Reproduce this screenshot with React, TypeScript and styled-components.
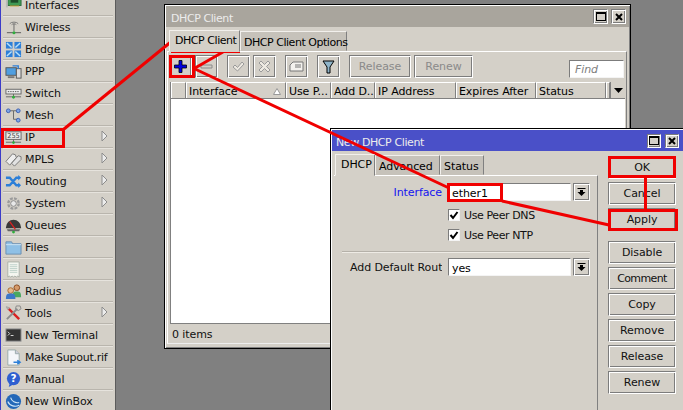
import React from "react";
import styled, { createGlobalStyle, css } from "styled-components";

const Global = createGlobalStyle`
  html, body { margin: 0; padding: 0; width: 683px; height: 410px; overflow: hidden; background: #808080; }
  * { box-sizing: border-box; }
`;

const FACE = "#d4d0c8";
const raised = css`
  border: 1px solid;
  border-color: #7c7c7c #fff #fff #7c7c7c;
  box-shadow: inset 1px 1px #fff, inset -1px -1px #7c7c7c;
  background: ${FACE};
`;
const sunken = css`
  border: 1px solid;
  border-color: #7c7c7c #f4f4f4 #f4f4f4 #7c7c7c;
  background: #fff;
`;

const Screen = styled.div`
  position: relative;
  width: 683px;
  height: 410px;
  overflow: hidden;
  display: flex;
  background: #808080;
  font: 11px/13px "DejaVu Sans", sans-serif;
  letter-spacing: -0.08px;
  color: #000;
`;
const Squeeze = styled.span<{ $by: number }>`
  letter-spacing: ${(p) => p.$by}px;
`;

const Sidebar = styled.nav`
  width: 116px;
  height: 410px;
  overflow: hidden;
  flex: none;
  background: ${FACE};
  border-left: 1px solid #3c3cc8;
  border-right: 1px solid #5c5c5c;
  padding: 0 2px;
`;
const MenuList = styled.div`
  margin-top: -6px;
  display: flex;
  flex-direction: column;
`;
const MenuRow = styled.div`
  height: 22px;
  flex: none;
  display: flex;
  align-items: center;
  padding: 1px 0 0 2px;
  gap: 3px;
  position: relative;
  border-bottom: 1px solid #b9b5ad;
  box-shadow: 0 1px #e6e3dd;
  white-space: nowrap;
  color: #111;
`;
const MenuIcon = styled.svg`
  width: 17px;
  height: 17px;
  flex: none;
`;
const Arrow = styled.svg`
  position: absolute;
  right: 5px;
  top: 4px;
  width: 7px;
  height: 12px;
`;

const Win = styled.section<{ $x: number; $y: number; $w: number; $h: number }>`
  position: absolute;
  left: ${(p) => p.$x}px;
  top: ${(p) => p.$y}px;
  width: ${(p) => p.$w}px;
  height: ${(p) => p.$h}px;
  border: 1px solid #000;
  background: ${FACE};
  box-shadow: inset 1px 1px #fff, inset -1px -1px #808080;
  padding: 1px 2px 4px;
  display: flex;
  flex-direction: column;
`;
const Title = styled.header<{ $active?: boolean }>`
  height: 21px;
  margin: 0 -1px;
  flex: none;
  display: flex;
  align-items: center;
  padding: 0 ${(p) => (p.$active ? 5 : 3)}px 0 ${(p) => (p.$active ? 4 : 5)}px;
  color: #ececec;
  background: ${(p) => (p.$active ? "#4a50c8" : "#a9a59d")};
`;
const TitleText = styled.span`
  flex: 1;
  padding-top: 4px;
`;
const TitleBtn = styled.div<{ $s: number; $gap: number }>`
  ${raised};
  width: ${(p) => p.$s}px;
  height: ${(p) => p.$s}px;
  margin-left: ${(p) => p.$gap}px;
  display: flex;
  align-items: center;
  justify-content: center;
`;
const MaxGlyph = styled.i`
  width: 10px;
  height: 9px;
  border: 1px solid #000;
  border-top-width: 2px;
`;

const TabBar = styled.div<{ $left: number }>`
  display: flex;
  align-items: flex-end;
  height: 24px;
  flex: none;
  padding-left: ${(p) => p.$left}px;
`;
const Tab = styled.div<{ $w: number; $on?: boolean }>`
  width: ${(p) => p.$w}px;
  height: ${(p) => (p.$on ? 22 : 20)}px;
  margin-bottom: ${(p) => (p.$on ? -1 : 0)}px;
  position: relative;
  z-index: ${(p) => (p.$on ? 1 : 0)};
  flex: none;
  background: ${(p) => (p.$on ? FACE : "#c6c2ba")};
  border: 1px solid;
  border-color: #f2f0ec #808080 transparent #f2f0ec;
  padding: ${(p) => (p.$on ? "3px" : "4px")} 0 0 ${(p) => (p.$on ? 5 : 3)}px;
  white-space: nowrap;
`;

const Panel = styled.div`
  flex: 1;
  min-height: 0;
  margin-right: 1px;
  border-top: 1px solid #fff;
  border-right: 1px solid #808080;
  border-bottom: 1px solid #eee;
  border-left: 1px solid #fff;
  display: flex;
  flex-direction: column;
`;
const Toolbar = styled.div`
  height: 30px;
  flex: none;
  display: flex;
  align-items: flex-start;
  padding: 3px 0 0 1px;
`;
const ToolBtn = styled.div<{ $gap?: number }>`
  ${raised};
  width: 23px;
  height: 23px;
  margin-right: ${(p) => p.$gap ?? 3}px;
  display: flex;
  align-items: center;
  justify-content: center;
  flex: none;
`;
const ToolIcon = styled.svg`
  width: 15px;
  height: 15px;
`;
const ToolText = styled.div<{ $w: number }>`
  ${raised};
  width: ${(p) => p.$w}px;
  height: 23px;
  margin-right: 3px;
  color: #8a8a8a;
  display: flex;
  align-items: center;
  justify-content: center;
  flex: none;
`;
const Find = styled.div`
  ${sunken};
  margin: 5px 2px 0 auto;
  width: 55px;
  height: 18px;
  padding: 2px 0 0 5px;
  color: #808080;
  font-style: italic;
`;

const Table = styled.div`
  flex: 1;
  min-height: 0;
  margin: 0 1px 0 2px;
  display: flex;
  flex-direction: column;
  border-bottom: 1px solid #808080;
  border-left: 1px solid #808080;
`;
const Head = styled.div`
  display: flex;
  height: 17px;
  flex: none;
  border-bottom: 1px solid #808080;
`;
const Col = styled.div<{ $w: number }>`
  width: ${(p) => p.$w}px;
  flex: none;
  padding: 2px 0 0 2px;
  border-right: 1px solid #808080;
  border-left: 1px solid #fff;
  border-top: 1px solid #fff;
  white-space: nowrap;
  overflow: hidden;
  position: relative;
`;
const ColMark = styled.svg`
  position: absolute;
  right: 4px;
  top: 5px;
  width: 8px;
  height: 7px;
`;
const ColMenu = styled.div`
  flex: 1;
  border-left: 1px solid #808080;
  display: flex;
  align-items: center;
  justify-content: center;
`;
const Body = styled.div`
  flex: 1;
  background: #fff;
`;
const Status = styled.div`
  height: 19px;
  flex: none;
  padding: 4px 0 0 4px;
  color: #111;
`;

const DlgBody = styled.div`
  flex: 1;
  display: flex;
  min-height: 0;
`;
const DlgMain = styled.div`
  width: 264px;
  flex: none;
  margin-left: 1px;
  display: flex;
  flex-direction: column;
`;
const Form = styled.div`
  flex: 1;
  border-top: 1px solid #fff;
  border-right: 1px solid #808080;
  padding: 7px 7px 0 8px;
  display: flex;
  flex-direction: column;
`;
const Row = styled.div`
  display: flex;
  align-items: center;
  height: 18px;
`;
const Label = styled.div<{ $blue?: boolean }>`
  width: 100px;
  flex: none;
  margin-right: 6px;
  padding-top: 1px;
  text-align: right;
  white-space: nowrap;
  overflow: hidden;
  color: ${(p) => (p.$blue ? "#1414f0" : "#111")};
`;
const ClippedLabel = styled(Label)`
  text-align: left;
  padding-left: 8px;
`;
const Field = styled.div`
  ${sunken};
  width: 123px;
  height: 18px;
  flex: none;
  padding: 3px 0 0 3px;
`;
const Drop = styled.div`
  ${raised};
  width: 17px;
  height: 18px;
  margin-left: 2px;
  display: flex;
  align-items: center;
  justify-content: center;
  flex: none;
`;
const CheckRow = styled.div<{ $top: number }>`
  display: flex;
  align-items: center;
  height: 14px;
  margin: ${(p) => p.$top}px 0 0 106px;
  gap: 4px;
  white-space: nowrap;
  color: #111;
`;
const Check = styled.div`
  ${sunken};
  width: 12px;
  height: 12px;
  display: flex;
  align-items: center;
  justify-content: center;
`;
const Rule = styled.div`
  height: 2px;
  margin: 9px 0 5px;
  background: linear-gradient(#b5b1a9 50%, #eeebe5 50%);
`;
const Buttons = styled.div`
  width: 85px;
  flex: none;
  padding: 5px 0 0 10px;
  display: flex;
  flex-direction: column;
`;
const DlgBtn = styled.div<{ $after?: number }>`
  ${raised};
  width: 68px;
  height: 23px;
  flex: none;
  margin-bottom: ${(p) => p.$after ?? 3}px;
  display: flex;
  align-items: center;
  justify-content: center;
  color: #111;
`;

const Mark = styled.div<{ $x: number; $y: number; $w: number; $h: number }>`
  position: absolute;
  left: ${(p) => p.$x}px;
  top: ${(p) => p.$y}px;
  width: ${(p) => p.$w}px;
  height: ${(p) => p.$h}px;
  border: 3px solid #f00000;
`;
const Lines = styled.svg`
  position: absolute;
  left: 0;
  top: 0;
  width: 683px;
  height: 410px;
  pointer-events: none;
`;

const icons: Record<string, React.ReactNode> = {
  interfaces: (
    <>
      <rect x="3" y="1" width="14" height="8" fill="#3f9a54" stroke="#2a6a3a" />
      <rect x="1" y="0" width="2" height="11" fill="#b9b9b9" />
      <rect x="6" y="3" width="8" height="3" fill="#1d4d2a" />
      <path d="M5 9.500h10" stroke="#c9a93c" />
    </>
  ),
  wireless: (
    <>
      <path d="M5 5a5 3 0 0 1 9 0M7 6a3 2 0 0 1 5 0" fill="none" stroke="#777" />
      <path d="M9.500 5v8" stroke="#666" />
      <path d="M2 14.500h15" stroke="#555" />
      <circle cx="9.500" cy="14.500" r="1.600" fill="#2fae3c" />
    </>
  ),
  bridge: (
    <>
      <rect x="1" y="1" width="7" height="7" fill="#2c7fd8" />
      <rect x="10" y="1" width="7" height="7" fill="#2c7fd8" />
      <rect x="1" y="10" width="7" height="7" fill="#2c7fd8" />
      <rect x="10" y="10" width="7" height="7" fill="#2c7fd8" />
      <path d="M2 2l5 5M16 2l-5 5M2 16l5-5M16 16l-5-5" stroke="#b8e0f8" strokeWidth="1.500" />
    </>
  ),
  ppp: (
    <>
      <rect x="1" y="5" width="11" height="8" fill="#4f9ee0" stroke="#555" />
      <path d="M3 15h7" stroke="#777" strokeWidth="2" />
      <rect x="12" y="6" width="5" height="10" fill="#dcdcdc" stroke="#555" />
      <path d="M8 3h6v3" fill="none" stroke="#2c7fd8" strokeWidth="1.500" />
    </>
  ),
  switch: (
    <>
      <rect x="1" y="4.500" width="16" height="5" fill="#ececec" stroke="#666" />
      <path d="M3 7h12" stroke="#555" strokeDasharray="1.500 1" />
      <path d="M1 12.500h16" stroke="#666" />
      <path d="M9 9.500v3" stroke="#666" />
      <circle cx="9" cy="13" r="1.500" fill="#2fae3c" />
    </>
  ),
  mesh: (
    <>
      <path d="M4 4h5v9h5M9 4h5" fill="none" stroke="#666" />
      <circle cx="3.500" cy="4" r="2" fill="#7da7e8" stroke="#3c5fb0" />
      <circle cx="14" cy="4" r="2" fill="#7da7e8" stroke="#3c5fb0" />
      <circle cx="14" cy="14" r="2" fill="#7da7e8" stroke="#3c5fb0" />
    </>
  ),
  ip: (
    <>
      <rect x="1" y="3" width="16" height="8" fill="#ececec" stroke="#666" />
      <text x="9" y="10" fontSize="7" textAnchor="middle" fontFamily="DejaVu Sans" fill="#444">255</text>
      <path d="M1 14h16" stroke="#666" />
      <path d="M9 11v3" stroke="#666" />
      <circle cx="9" cy="14.400" r="1.400" fill="#2fae3c" />
    </>
  ),
  mpls: (
    <>
      <path d="M1 11l7-8 3 1 1 3-7 8z" fill="#eee" stroke="#777" />
      <path d="M7 13l7-8 3 1 0 3-7 7z" fill="#e2e2e2" stroke="#777" />
    </>
  ),
  routing: (
    <>
      <path d="M1 5h4l7 8h3M1 13h4l7-8h3" fill="none" stroke="#2c7fd8" strokeWidth="2.500" />
      <path d="M14 2l3 3-3 3zM14 10l3 3-3 3z" fill="#2c7fd8" />
    </>
  ),
  system: (
    <>
      <circle cx="9" cy="9" r="5.500" fill="none" stroke="#9b9b9b" strokeWidth="2.500" strokeDasharray="3 1.300" />
      <circle cx="9" cy="9" r="3" fill="#e8e8e8" stroke="#888" />
    </>
  ),
  queues: (
    <>
      <path d="M1 11a8 8 0 0 1 16 0v1H1z" fill="#3a3a3a" />
      <path d="M2 13h14l-1 2H3z" fill="#666" />
      <path d="M5 5l6 8" stroke="#e02020" strokeWidth="1.300" />
      <circle cx="9" cy="16" r="1.500" fill="#2fae3c" />
    </>
  ),
  files: (
    <>
      <path d="M1 3h6l1 2h9v11H1z" fill="#8fc0e6" stroke="#6a8eb0" />
      <path d="M1 6h16" stroke="#cfe4f4" />
    </>
  ),
  log: (
    <>
      <path d="M3 1h12v16l-1.500-1-1.500 1-1.500-1-1.500 1-1.500-1-1.500 1-1.500-1L3 17z" fill="#f4f6f0" stroke="#aab0a8" />
      <path d="M5 4h8M5 6h8M5 8h8M5 10h8M5 12h8" stroke="#bcd0c8" />
    </>
  ),
  radius: (
    <>
      <circle cx="12.500" cy="5" r="3" fill="#d49a6a" stroke="#8a4a20" />
      <path d="M8 15c0-5 1-6 4.500-6s4.500 1 4.500 6z" fill="#4aa860" />
      <circle cx="6" cy="8" r="3" fill="#e8b88a" stroke="#a86a30" />
      <path d="M1 17c0-5 1-6 5-6s5 1 5 6z" fill="#3c78c8" />
    </>
  ),
  tools: (
    <>
      <path d="M3 3l12 12" stroke="#d82020" strokeWidth="2.500" />
      <path d="M2 15L13 4" stroke="#8c8c8c" strokeWidth="2" />
      <path d="M12 1h4l1 3-3 2-3-2z" fill="none" stroke="#888" />
      <path d="M1 1l3 1 1 2-2 1-2-2z" fill="#aaa" />
    </>
  ),
  terminal: (
    <>
      <rect x="1" y="2" width="16" height="13" fill="#333" stroke="#999" />
      <path d="M3 5l2 2-2 2M6 9h3" fill="none" stroke="#ddd" />
    </>
  ),
  supout: (
    <>
      <path d="M3 1h8l4 4v12H3z" fill="#f4f6fa" stroke="#9aa" />
      <path d="M11 1v4h4" fill="#ccd" stroke="#9aa" />
      <path d="M9 14h6M13 12l3 2-3 2" fill="none" stroke="#2c7fd8" strokeWidth="1.500" />
    </>
  ),
  manual: (
    <>
      <circle cx="9" cy="8" r="7" fill="#2f5fd0" />
      <path d="M5 13l-1 4 5-3z" fill="#2f5fd0" />
      <text x="9" y="12" fontSize="11" fontWeight="bold" textAnchor="middle" fontFamily="DejaVu Sans" fill="#fff">?</text>
    </>
  ),
  winbox: (
    <>
      <circle cx="9" cy="9" r="8" fill="#2468b8" />
      <path d="M3 9c2 5 8 6 12 4M6 5c1 4 5 6 9 5" fill="none" stroke="#cfe6f8" strokeWidth="1.200" />
    </>
  ),
};

const menu: [string, string, boolean?, number?][] = [
  ["Interfaces", "interfaces"],
  ["Wireless", "wireless"],
  ["Bridge", "bridge"],
  ["PPP", "ppp"],
  ["Switch", "switch"],
  ["Mesh", "mesh"],
  ["IP", "ip", true],
  ["MPLS", "mpls", true],
  ["Routing", "routing", true],
  ["System", "system", true],
  ["Queues", "queues"],
  ["Files", "files"],
  ["Log", "log"],
  ["Radius", "radius"],
  ["Tools", "tools", true],
  ["New Terminal", "terminal"],
  ["Make Supout.rif", "supout", false, -0.27],
  ["Manual", "manual"],
  ["New WinBox", "winbox"],
];

const CloseGlyph = () => (
  <svg width="10" height="10" viewBox="0 0 10 10">
    <path d="M2 2l6 6M8 2l-6 6" stroke="#000" strokeWidth="2" />
  </svg>
);
const DropGlyph = () => (
  <svg width="9" height="9" viewBox="0 0 9 9">
    <path d="M.5 .5h8" stroke="#000" />
    <path d="M3 2h3v2h2.500L4.500 8 .5 4H3z" fill="#000" />
  </svg>
);
const CheckGlyph = () => (
  <svg width="10" height="10" viewBox="0 0 10 10">
    <path d="M1.500 5l2.500 3 4.500-6" fill="none" stroke="#000" strokeWidth="2" />
  </svg>
);

export default function App() {
  return (
    <Screen>
      <Global />
      <Sidebar>
        <MenuList>
          {menu.map(([label, icon, sub, by]) => (
            <MenuRow key={label}>
              <MenuIcon viewBox="0 0 18 18">{icons[icon]}</MenuIcon>
              {by ? <Squeeze $by={by}>{label}</Squeeze> : label}
              {sub && (
                <Arrow viewBox="0 0 7 12">
                  <path d="M1 1l5 5-5 5z" fill="#ececec" stroke="#8c8c8c" />
                </Arrow>
              )}
            </MenuRow>
          ))}
        </MenuList>
      </Sidebar>

      <Win $x={164} $y={4} $w={467} $h={345}>
        <Title>
          <TitleText><Squeeze $by={-0.42}>DHCP Client</Squeeze></TitleText>
          <TitleBtn $s={15} $gap={3}><MaxGlyph /></TitleBtn>
          <TitleBtn $s={15} $gap={3}><CloseGlyph /></TitleBtn>
        </Title>
        <TabBar $left={2}>
          <Tab $w={71} $on><Squeeze $by={-0.45}>DHCP Client</Squeeze></Tab>
          <Tab $w={107}><Squeeze $by={-0.47}>DHCP Client Options</Squeeze></Tab>
        </TabBar>
        <Panel>
          <Toolbar>
            <ToolBtn>
              <ToolIcon viewBox="0 0 15 15">
                <path d="M6 1.500h3v4.500h4.500v3H9v4.500H6V9H1.500V6H6z" fill="#0000e0" stroke="#000" strokeWidth=".8" />
              </ToolIcon>
            </ToolBtn>
            <ToolBtn $gap={9}>
              <ToolIcon viewBox="0 0 15 15">
                <path d="M2 6h11v3H2z" fill="#d4d0c8" stroke="#8a8a8a" />
              </ToolIcon>
            </ToolBtn>
            <ToolBtn>
              <ToolIcon viewBox="0 0 15 15">
                <path d="M2 8l2-2 2.500 2.500L11 3l2 2-6.500 7z" fill="#eeeae2" stroke="#9a9a9a" />
              </ToolIcon>
            </ToolBtn>
            <ToolBtn $gap={9}>
              <ToolIcon viewBox="0 0 15 15">
                <path d="M2 4l2-2 3.500 3.500L11 2l2 2-3.500 3.500L13 11l-2 2-3.500-3.500L4 13l-2-2 3.500-3.500z" fill="#eeeae2" stroke="#9a9a9a" />
              </ToolIcon>
            </ToolBtn>
            <ToolBtn $gap={9}>
              <ToolIcon viewBox="0 0 15 15">
                <path d="M1 6l3-3h10v9H1z" fill="#f4f2ee" stroke="#777" />
                <path d="M6 6h6M6 8h6" stroke="#777" />
              </ToolIcon>
            </ToolBtn>
            <ToolBtn $gap={9}>
              <ToolIcon viewBox="0 0 15 15">
                <path d="M2 2h11L9 8v6H6V8z" fill="#8fb4c8" stroke="#000" />
              </ToolIcon>
            </ToolBtn>
            <ToolText $w={62}>Release</ToolText>
            <ToolText $w={59}>Renew</ToolText>
            <Find>Find</Find>
          </Toolbar>
          <Table>
            <Head>
              <Col $w={15} />
              <Col $w={100}>
                Interface
                <ColMark viewBox="0 0 8 7"><path d="M4 .5l3.500 6H.5z" fill="#fff" stroke="#999" /></ColMark>
              </Col>
              <Col $w={45}>Use P...</Col>
              <Col $w={44}>Add D...</Col>
              <Col $w={81}>IP Address</Col>
              <Col $w={80}>Expires After</Col>
              <Col $w={70}>Status</Col>
              <Col $w={4} />
              <ColMenu>
                <svg width="9" height="5" viewBox="0 0 9 5"><path d="M0 0h9L4.500 5z" fill="#000" /></svg>
              </ColMenu>
            </Head>
            <Body />
          </Table>
          <Status>0 items</Status>
        </Panel>
      </Win>

      <Win $x={330} $y={128} $w={356} $h={290}>
        <Title $active>
          <TitleText><Squeeze $by={-0.4}>New DHCP Client</Squeeze></TitleText>
          <TitleBtn $s={14} $gap={4}><MaxGlyph /></TitleBtn>
          <TitleBtn $s={14} $gap={4}><CloseGlyph /></TitleBtn>
        </Title>
        <DlgBody>
          <DlgMain>
            <TabBar $left={1}>
              <Tab $w={40} $on>DHCP</Tab>
              <Tab $w={65}>Advanced</Tab>
              <Tab $w={44}>Status</Tab>
            </TabBar>
            <Form>
              <Row>
                <Label $blue>Interface</Label>
                <Field>ether1</Field>
                <Drop><DropGlyph /></Drop>
              </Row>
              <CheckRow $top={7}>
                <Check><CheckGlyph /></Check>
                <Squeeze $by={-0.4}>Use Peer DNS</Squeeze>
              </CheckRow>
              <CheckRow $top={6}>
                <Check><CheckGlyph /></Check>
                <Squeeze $by={-0.4}>Use Peer NTP</Squeeze>
              </CheckRow>
              <Rule />
              <Row>
                <ClippedLabel>Add Default Route</ClippedLabel>
                <Field>yes</Field>
                <Drop><DropGlyph /></Drop>
              </Row>
            </Form>
          </DlgMain>
          <Buttons>
            <DlgBtn>OK</DlgBtn>
            <DlgBtn>Cancel</DlgBtn>
            <DlgBtn $after={10}>Apply</DlgBtn>
            <DlgBtn>Disable</DlgBtn>
            <DlgBtn><Squeeze $by={-0.6}>Comment</Squeeze></DlgBtn>
            <DlgBtn>Copy</DlgBtn>
            <DlgBtn>Remove</DlgBtn>
            <DlgBtn>Release</DlgBtn>
            <DlgBtn>Renew</DlgBtn>
          </Buttons>
        </DlgBody>
      </Win>

      <Lines viewBox="0 0 683 410">
        <g stroke="#f00000" strokeWidth="3" fill="none">
          <path d="M64 129L172 41" />
          <path d="M223 52L195 68" />
          <path d="M195 69L449 188" />
          <path d="M502 201L609 225" />
          <path d="M645.500 176V209" />
        </g>
      </Lines>
      <Mark $x={1} $y={128} $w={64} $h={20} />
      <Mark $x={171} $y={30} $w={69} $h={23} />
      <Mark $x={169} $y={55} $w={26} $h={23} />
      <Mark $x={447} $y={183} $w={56} $h={19} />
      <Mark $x={608} $y={156} $w={68} $h={22} />
      <Mark $x={608} $y={209} $w={70} $h={22} />
    </Screen>
  );
}
